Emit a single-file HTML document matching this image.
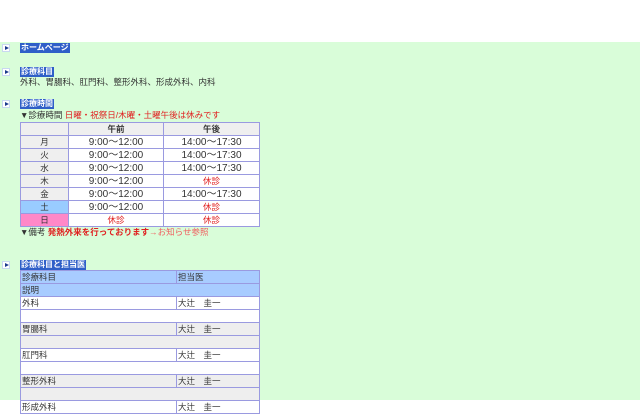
<!DOCTYPE html>
<html><head><meta charset="utf-8"><style>
*{margin:0;padding:0;box-sizing:border-box}
body{width:640px;height:400px;overflow:hidden;background:#fff;font-family:"Liberation Sans","Noto Sans CJK JP",sans-serif;font-size:8.5px;color:#333;position:relative}
#g{position:absolute;top:42px;left:0;width:640px;height:358px;background:#d9fdd9}
.a{position:absolute;line-height:11px}
.ic{position:absolute;left:2px;width:8px;height:8px;background:#fff;border:1px solid #c8d8f0}
.ic:after{content:"";position:absolute;left:2px;top:1px;border-left:4px solid #1c3a8c;border-top:2.5px solid transparent;border-bottom:2.5px solid transparent}
.h{position:absolute;left:20px;background:#2f5fc8;color:#fff;font-weight:bold;font-size:8px;line-height:10px;padding:0 1px}
table{position:absolute;border-collapse:collapse;font-size:8.5px;line-height:11px}
td{border:1px solid #9a9ae0;height:13px;text-align:center;padding:0}
.t{font-size:10px}
#t1{left:20px;top:122px;width:240px}
#t1 td{background:#fff}
#t1 tr td:first-child{background:#efefef;width:48px}
#t1 tr:first-child td{background:#efefef;font-weight:bold}
.r{color:#e02020}
#t2{left:20px;top:270px;width:240px}
#t2 td{text-align:left;padding-left:1px;height:13px}
.b td{background:#a8ccff}
.w td{background:#fff}
.e td{background:#eee}
.s td{height:9px;font-size:1px;line-height:1px}
</style></head><body>
<div id="g"></div>
<div class="ic" style="top:44px"></div><div class="h" style="top:43px">ホームページ</div>
<div class="ic" style="top:68px"></div><div class="h" style="top:67px">診療科目</div>
<div class="a" style="left:20px;top:77px">外科、胃腸科、肛門科、整形外科、形成外科、内科</div>
<div class="ic" style="top:100px"></div><div class="h" style="top:99px">診療時間</div>
<div class="a" style="left:20px;top:110px">▼診療時間 <span class="r">日曜・祝祭日/木曜・土曜午後は休みです</span></div>
<table id="t1">
<tr><td></td><td style="width:95px">午前</td><td>午後</td></tr>
<tr><td>月</td><td class="t">9:00～12:00</td><td class="t">14:00～17:30</td></tr>
<tr><td>火</td><td class="t">9:00～12:00</td><td class="t">14:00～17:30</td></tr>
<tr><td>水</td><td class="t">9:00～12:00</td><td class="t">14:00～17:30</td></tr>
<tr><td>木</td><td class="t">9:00～12:00</td><td class="r">休診</td></tr>
<tr><td>金</td><td class="t">9:00～12:00</td><td class="t">14:00～17:30</td></tr>
<tr><td style="background:#99ccff">土</td><td class="t">9:00～12:00</td><td class="r">休診</td></tr>
<tr><td style="background:#ff88c8">日</td><td class="r">休診</td><td class="r">休診</td></tr>
</table>
<div class="a" style="left:20px;top:227px">▼備考 <b class="r">発熱外来を行っております</b><span style="color:#f06060">→お知らせ参照</span></div>
<div class="ic" style="top:261px"></div><div class="h" style="top:260px">診療科目と担当医</div>
<table id="t2">
<tr class="b"><td style="width:156px">診療科目</td><td>担当医</td></tr>
<tr class="b"><td colspan="2">説明</td></tr>
<tr class="w"><td>外科</td><td>大辻　圭一</td></tr>
<tr class="w s"><td colspan="2"></td></tr>
<tr class="e"><td>胃腸科</td><td>大辻　圭一</td></tr>
<tr class="e s"><td colspan="2"></td></tr>
<tr class="w"><td>肛門科</td><td>大辻　圭一</td></tr>
<tr class="w s"><td colspan="2"></td></tr>
<tr class="e"><td>整形外科</td><td>大辻　圭一</td></tr>
<tr class="e s"><td colspan="2"></td></tr>
<tr class="w"><td>形成外科</td><td>大辻　圭一</td></tr>
</table>
</body></html>
